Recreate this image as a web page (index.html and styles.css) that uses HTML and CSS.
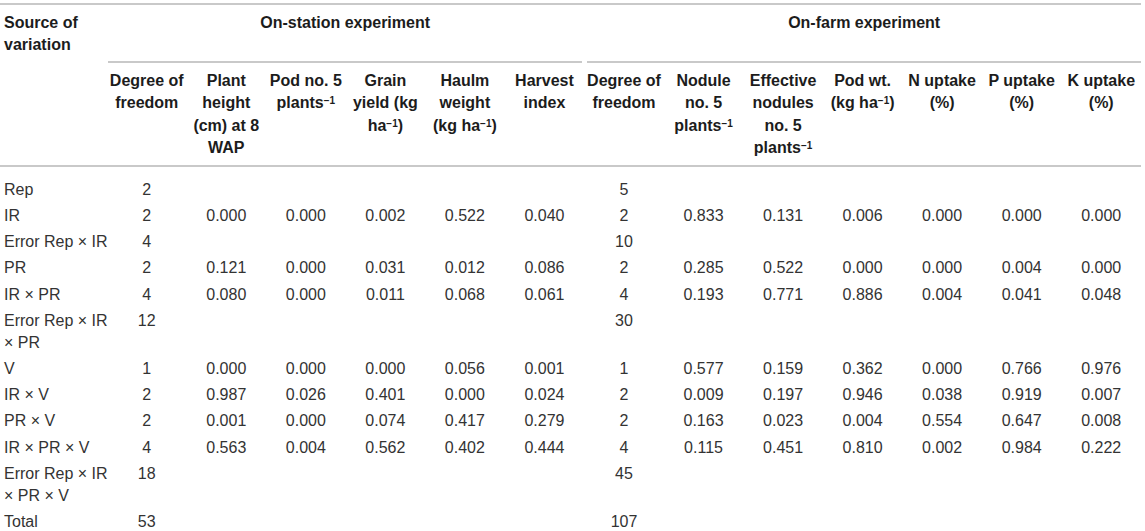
FILE: index.html
```html
<html>

<head>
    <meta name="viewport" content="width=device-width, initial-scale=1.0">
    <title>ANOVA table</title>
    <link rel="stylesheet" href="styles.css">
</head>

<body>
    <table class="anova">
        <colgroup>
            <col class="col-src">
            <col span="13" class="col-num">
        </colgroup>
        <thead>
            <tr class="top">
                <th class="src">Source of variation</th>
                <th class="group" colspan="6"><div class="rule station">On-station experiment</div></th>
                <th class="group" colspan="7"><div class="rule farm">On-farm experiment</div></th>
            </tr>
            <tr class="cols">
                <th class="src"></th>
                <th>Degree of freedom</th>
                <th>Plant height (cm) at 8 WAP</th>
                <th>Pod no. 5 plants<sup>&minus;1</sup></th>
                <th>Grain yield (kg ha<sup>&minus;1</sup>)</th>
                <th>Haulm weight (kg ha<sup>&minus;1</sup>)</th>
                <th>Harvest index</th>
                <th>Degree of freedom</th>
                <th>Nodule no. 5 plants<sup>&minus;1</sup></th>
                <th>Effective nodules no. 5 plants<sup>&minus;1</sup></th>
                <th>Pod wt. (kg ha<sup>&minus;1</sup>)</th>
                <th>N uptake (%)</th>
                <th>P uptake (%)</th>
                <th>K uptake (%)</th>
            </tr>
        </thead>
        <tbody>
            <tr>
                <td class="src">Rep</td>
                <td>2</td><td></td><td></td><td></td><td></td><td></td>
                <td>5</td><td></td><td></td><td></td><td></td><td></td><td></td>
            </tr>
            <tr>
                <td class="src">IR</td>
                <td>2</td><td>0.000</td><td>0.000</td><td>0.002</td><td>0.522</td><td>0.040</td>
                <td>2</td><td>0.833</td><td>0.131</td><td>0.006</td><td>0.000</td><td>0.000</td><td>0.000</td>
            </tr>
            <tr>
                <td class="src"><span class="nw">Error Rep &times; IR</span></td>
                <td>4</td><td></td><td></td><td></td><td></td><td></td>
                <td>10</td><td></td><td></td><td></td><td></td><td></td><td></td>
            </tr>
            <tr>
                <td class="src">PR</td>
                <td>2</td><td>0.121</td><td>0.000</td><td>0.031</td><td>0.012</td><td>0.086</td>
                <td>2</td><td>0.285</td><td>0.522</td><td>0.000</td><td>0.000</td><td>0.004</td><td>0.000</td>
            </tr>
            <tr>
                <td class="src">IR &times; PR</td>
                <td>4</td><td>0.080</td><td>0.000</td><td>0.011</td><td>0.068</td><td>0.061</td>
                <td>4</td><td>0.193</td><td>0.771</td><td>0.886</td><td>0.004</td><td>0.041</td><td>0.048</td>
            </tr>
            <tr>
                <td class="src"><span class="nw">Error Rep &times; IR</span> &times; PR</td>
                <td>12</td><td></td><td></td><td></td><td></td><td></td>
                <td>30</td><td></td><td></td><td></td><td></td><td></td><td></td>
            </tr>
            <tr>
                <td class="src">V</td>
                <td>1</td><td>0.000</td><td>0.000</td><td>0.000</td><td>0.056</td><td>0.001</td>
                <td>1</td><td>0.577</td><td>0.159</td><td>0.362</td><td>0.000</td><td>0.766</td><td>0.976</td>
            </tr>
            <tr>
                <td class="src">IR &times; V</td>
                <td>2</td><td>0.987</td><td>0.026</td><td>0.401</td><td>0.000</td><td>0.024</td>
                <td>2</td><td>0.009</td><td>0.197</td><td>0.946</td><td>0.038</td><td>0.919</td><td>0.007</td>
            </tr>
            <tr>
                <td class="src">PR &times; V</td>
                <td>2</td><td>0.001</td><td>0.000</td><td>0.074</td><td>0.417</td><td>0.279</td>
                <td>2</td><td>0.163</td><td>0.023</td><td>0.004</td><td>0.554</td><td>0.647</td><td>0.008</td>
            </tr>
            <tr>
                <td class="src">IR &times; PR &times; V</td>
                <td>4</td><td>0.563</td><td>0.004</td><td>0.562</td><td>0.402</td><td>0.444</td>
                <td>4</td><td>0.115</td><td>0.451</td><td>0.810</td><td>0.002</td><td>0.984</td><td>0.222</td>
            </tr>
            <tr>
                <td class="src"><span class="nw">Error Rep &times; IR</span> &times; PR &times; V</td>
                <td>18</td><td></td><td></td><td></td><td></td><td></td>
                <td>45</td><td></td><td></td><td></td><td></td><td></td><td></td>
            </tr>
            <tr>
                <td class="src">Total</td>
                <td>53</td><td></td><td></td><td></td><td></td><td></td>
                <td>107</td><td></td><td></td><td></td><td></td><td></td><td></td>
            </tr>
        </tbody>
    </table>
</body>

</html>
```

FILE: styles.css
```css
body {
    margin: 0;
    background-color: #fff;
    font-family: "Liberation Sans", Arial, Helvetica, sans-serif;
    font-size: 15px;
    color: #333;
}

.anova {
    margin-top: 3px;
    width: 1141px;
    table-layout: fixed;
    border-collapse: separate;
    border-spacing: 0;
    line-height: 22.5px;
}

.col-src {
    width: 107px;
}

.col-num {
    width: 79.54px;
}

.anova th,
.anova td {
    padding: 1.8px 1px;
    text-align: center;
    vertical-align: top;
}

.anova th {
    font-weight: bold;
    color: #1c1c1c;
}

.anova .src {
    text-align: left;
    padding-left: 4px;
    padding-right: 0;
}

.nw {
    white-space: nowrap;
}

.top th {
    border-top: 2px solid #c9c9c9;
    padding-top: 6.8px;
    padding-bottom: 6.5px;
}

.top .group {
    vertical-align: bottom;
    padding: 0;
}

.rule {
    padding: 0 4px 27px;
    border-bottom: 2px solid #c9c9c9;
}

.station {
    margin: 0 2px 0 1px;
}

.farm {
    margin-left: 3px;
}

.cols th {
    padding-top: 6.7px;
    padding-bottom: 5.5px;
    border-bottom: 2px solid #c9c9c9;
}

tbody tr:first-child td {
    padding-top: 11.7px;
}

sup {
    font-size: 10px;
    line-height: 0;
    vertical-align: 4px;
}
```
